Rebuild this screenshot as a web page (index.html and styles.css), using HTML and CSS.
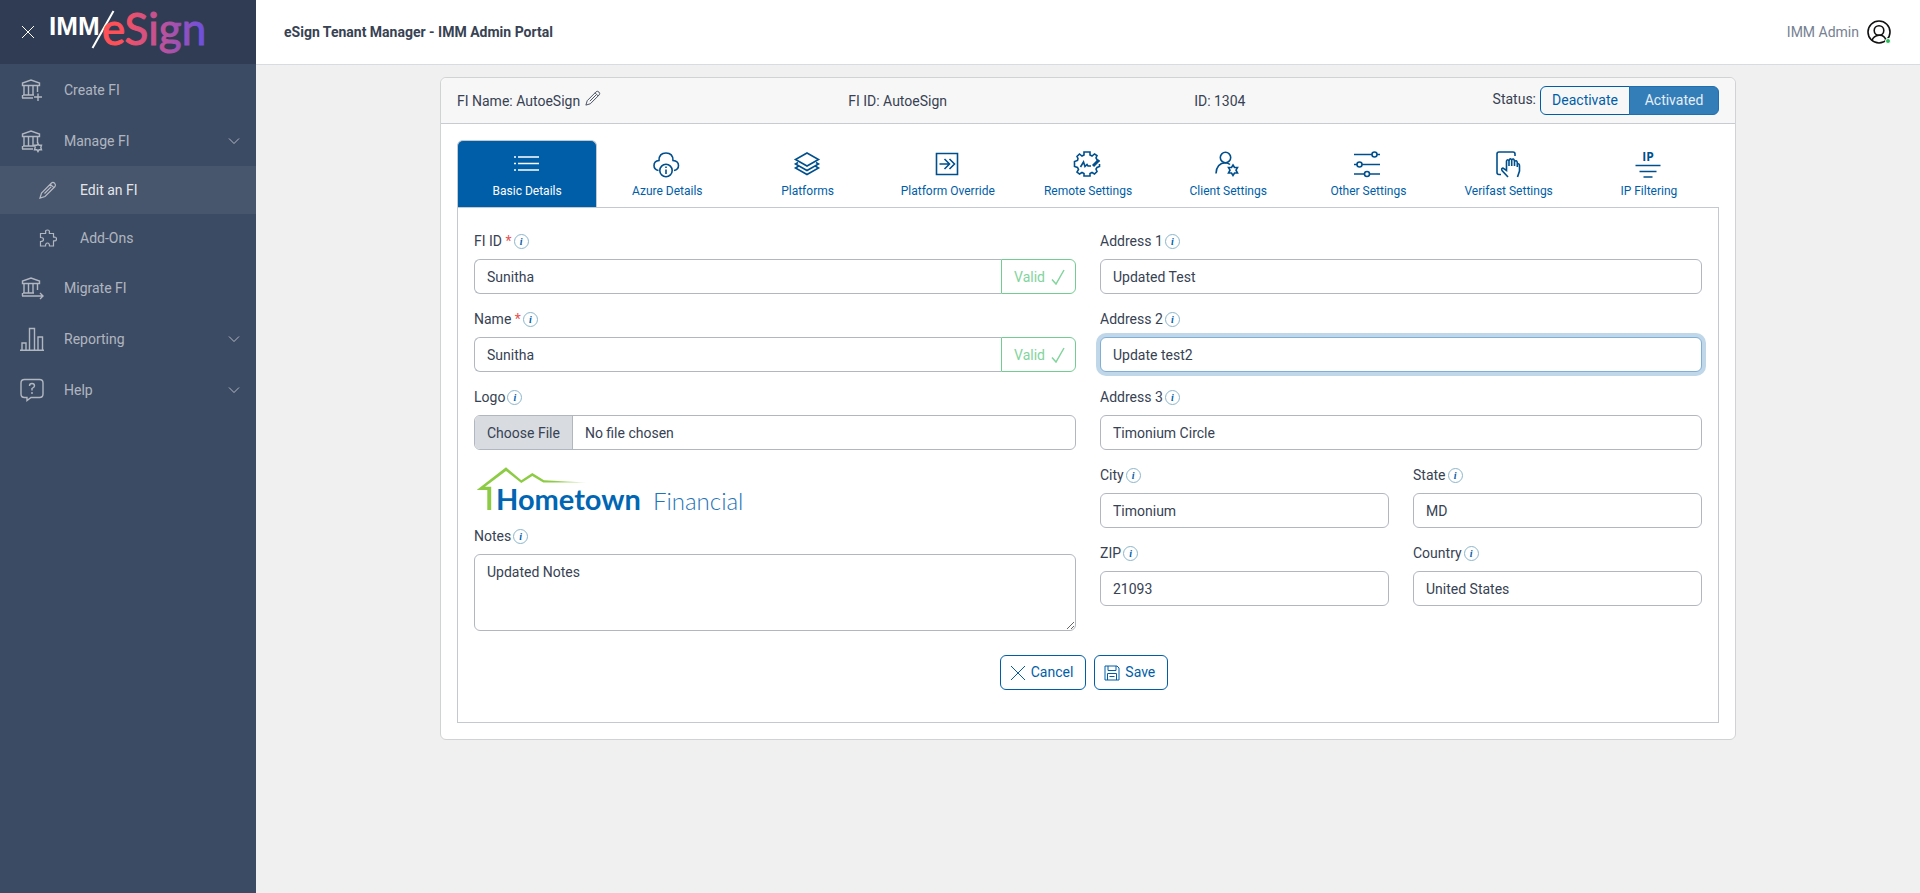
FILE: index.html
```html
<!DOCTYPE html>
<html lang="en">
<head>
    <meta charset="UTF-8">
    <meta name="viewport" content="width=device-width, initial-scale=1.0">
    <title>eSign Tenant Manager - IMM Admin Portal</title>
    <link rel="stylesheet" href="styles.css">
</head>
<body>
    <svg class="sprite" aria-hidden="true">
        <symbol id="bank" viewBox="0 0 24 24">
            <path d="M2.500 7.500V5L11 2 19.500 5V7.500ZM4 8V17M8.500 8V17M13 8V17M17.500 8V14M3 17H14M2 20H13M2.500 17V20"/>
        </symbol>
        <symbol id="pencil" viewBox="0 0 18 18">
            <path d="M1 17 2.500 12 12.500 2Q14 .8 15.700 2.300 17.200 4 16 5.500L6 15.500ZM11.300 3.200 14.800 6.700M5.500 12.500 12.300 5.700"/>
        </symbol>
        <symbol id="chevron" viewBox="0 0 12 12">
            <path d="M1 3.500 6 8.500 11 3.500"/>
        </symbol>
        <symbol id="check" viewBox="0 0 14 16">
            <path d="M1 10.500 5 15 13 1"/>
        </symbol>
    </svg>

    <aside class="sidebar">
        <div class="brand">
            <button class="close" aria-label="Close menu">
                <svg viewBox="0 0 14 14"><path d="M1 1 13 13M13 1 1 13"/></svg>
            </button>
            <svg class="logo" viewBox="0 0 158 50" role="img" aria-label="IMM eSign">
                <defs>
                    <linearGradient id="brandFill" gradientUnits="userSpaceOnUse" x1="54" y1="0" x2="156" y2="0">
                        <stop offset="0.15" stop-color="#ff5058"/>
                        <stop offset="0.6" stop-color="#b8529e"/>
                        <stop offset="1" stop-color="#6a50e0"/>
                    </linearGradient>
                </defs>
                <text class="logo-imm" x="0" y="28">IMM</text>
                <path class="logo-slash" d="M43.500 41 64.500 4"/>
                <text class="logo-esign" x="53" y="38">eSign</text>
            </svg>
        </div>
        <nav class="menu">
            <a href="#">
                <svg><use href="#bank"/><path d="M18 15.500V23M14 19H22"/></svg>
                Create FI
            </a>
            <a href="#">
                <svg><use href="#bank"/><path d="M18 14.500 19 16.200H21.500L20.800 18.500 21.500 20.800H19L18 22.500 17 20.800H14.500L15.200 18.500 14.500 16.200H17Z"/></svg>
                Manage FI
                <svg class="chevron"><use href="#chevron"/></svg>
            </a>
            <a href="#" class="sub active">
                <svg><use href="#pencil"/></svg>
                Edit an FI
            </a>
            <a href="#" class="sub">
                <svg viewBox="0 0 18 18"><path d="M1.500 4.500H6.500Q7 4 6.500 3 6.500 1 8.500 1T10.500 3Q10 4 10.500 4.500H14.500V8Q15 8.500 15.500 8 17.500 8 17.500 10T15.500 12Q15 11.500 14.500 12V17H10.500Q10.500 14 8.500 14T6.500 17H1.500V12.500Q4.500 12.500 4.500 10.500T1.500 8.500Z"/></svg>
                Add-Ons
            </a>
            <a href="#">
                <svg><use href="#bank"/><path d="M13 20H23M20 17 23 20 20 23"/></svg>
                Migrate FI
            </a>
            <a href="#">
                <svg><path d="M0 23.300H24M2 23V16H6V23M9.500 23V1.500H14.500V23M18 23V10H22.500V23"/></svg>
                Reporting
                <svg class="chevron"><use href="#chevron"/></svg>
            </a>
            <a href="#">
                <svg><path d="M4.500 1.500H19.500Q23 1.500 23 5V16Q23 19.500 19.500 19.500H11L7 22.500V19.500H4.500Q1 19.500 1 16V5Q1 1.500 4.500 1.500Z"/><path d="M9.500 8Q9.500 5.500 12 5.500T14.500 8Q14.500 9.200 12 10.500V12.500M12 14V16"/></svg>
                Help
                <svg class="chevron"><use href="#chevron"/></svg>
            </a>
        </nav>
    </aside>

    <div class="wrapper">
        <header class="topbar">
            <h1>eSign Tenant Manager - IMM Admin Portal</h1>
            <a href="#" class="user">
                IMM Admin
                <svg viewBox="0 0 24 24">
                    <circle cx="12" cy="12" r="11"/>
                    <circle cx="12" cy="10.500" r="4.800"/>
                    <path d="M5 20.500Q6.500 15.800 12 15.300T19 20.500"/>
                    <circle class="online" cx="21" cy="21" r="2.500"/>
                </svg>
            </a>
        </header>

        <main class="container">
            <section class="card">
                <div class="card-header">
                    <div class="fi-name">
                        FI Name: AutoeSign
                        <button class="edit" aria-label="Edit name"><svg><use href="#pencil"/></svg></button>
                    </div>
                    <div>FI ID: AutoeSign</div>
                    <div>ID: 1304</div>
                    <div class="status">
                        <span>Status:</span>
                        <div class="btn-group">
                            <button>Deactivate</button>
                            <button class="on" disabled>Activated</button>
                        </div>
                    </div>
                </div>

                <div class="card-body">
                    <div class="tabs" role="tablist">
                        <button role="tab" aria-selected="true" class="active">
                            <svg viewBox="0 0 28 28"><path d="M6 7H27M6 13.500H27M6 20H27M2 7H4M2 13.500H4M2 20H4"/></svg>
                            Basic Details
                        </button>
                        <button role="tab" aria-selected="false">
                            <svg viewBox="0 0 28 28"><path d="M6.500 20.500Q2 19.500 2 15.500 2 11 7 10.500 7 3 14 3T21 10.500Q26.500 11 26.500 15.500 26.500 19.500 22 20.500"/><circle cx="14" cy="20.500" r="6.200"/><path d="M14 19.500V24M14 16.500V18"/></svg>
                            Azure Details
                        </button>
                        <button role="tab" aria-selected="false">
                            <svg viewBox="0 0 28 28"><path d="M14 3 25.500 9.500 14 16 2.500 9.500ZM5 12.500 2.500 14 14 20.500 25.500 14 23 12.500M5 16.500 2.500 18 14 24.500 25.500 18 23 16.500"/></svg>
                            Platforms
                        </button>
                        <button role="tab" aria-selected="false">
                            <svg viewBox="0 0 28 28"><path d="M3.500 3.500H24.500V24.500H3.500ZM6.500 14H16M11.500 9 16.500 14 11.500 19M16.500 9 21.500 14 16.500 19"/></svg>
                            Platform Override
                        </button>
                        <button role="tab" aria-selected="false">
                            <svg viewBox="0 0 28 28"><path d="M26.500 11 24.500 10.500 23 8 24 5.500 21.500 4 19 6 17 5V2H11V5L9 6 6.500 4 4 6.500 5 8.500 4.500 10.500 1.500 11.500V16.500L4.500 17.500 5.500 19.500 4 22 6.500 24 9 22.500 11 23.500V26H17V23.500L19 22.500 21.500 24 24 21.500 23 19 24 17.500 26.500 16.500V14"/><path d="M7.500 17 10.500 12 12 16.500 14 14.500 15 16 18 16"/><path class="thick" d="M20 16 26 10"/></svg>
                            Remote Settings
                        </button>
                        <button role="tab" aria-selected="false">
                            <svg viewBox="0 0 28 28"><circle cx="12.500" cy="7.500" r="5.200"/><path d="M3 23.500Q3.500 13 12.500 12.700 15 12.700 17 14.500"/><path d="M20 15 21.500 17.500H24.500L23 20.200 24.500 23H21.500L20 25.500 18.500 23H15.500L17 20.200 15.500 17.500H18.500Z"/></svg>
                            Client Settings
                        </button>
                        <button role="tab" aria-selected="false">
                            <svg viewBox="0 0 28 28"><path d="M1 4.500H19M24 4.500H27M1 14.500H4M9 14.500H27M1 24H11.500M16.500 24H27"/><circle cx="21.500" cy="4.500" r="2.500"/><circle cx="6.500" cy="14.500" r="2.500"/><circle cx="14" cy="24" r="2.500"/></svg>
                            Other Settings
                        </button>
                        <button role="tab" aria-selected="false">
                            <svg viewBox="0 0 28 28"><path d="M7 24.500H5Q3 24.500 3 22.500V4Q3 2 5 2H19Q21 2 21 4V6M14 27 8 20.500Q7 18.500 9 18L12.500 20.500V11Q13.500 8.500 15 11V16M15 11Q16 7 17.700 10V16M17.700 10Q19.500 7.500 20.500 11V16M20.500 11.500Q22.500 9.500 23.300 12.500V17M23.300 14Q25.500 13 25.500 16V21L23.500 27"/></svg>
                            Verifast Settings
                        </button>
                        <button role="tab" aria-selected="false">
                            <svg viewBox="0 0 28 28"><text x="14" y="11">IP</text><path d="M1.500 15.500H26.500M5.500 21.500H22.500M9.500 27H18.500"/></svg>
                            IP Filtering
                        </button>
                    </div>

                    <form class="panel">
                        <div class="columns">
                            <div class="column">
                                <div class="field">
                                    <label for="fiId">FI ID <span class="required">*</span><span class="info">i</span></label>
                                    <div class="input-group">
                                        <input type="text" id="fiId" value="Sunitha">
                                        <span class="valid">Valid <svg><use href="#check"/></svg></span>
                                    </div>
                                </div>
                                <div class="field">
                                    <label for="name">Name <span class="required">*</span><span class="info">i</span></label>
                                    <div class="input-group">
                                        <input type="text" id="name" value="Sunitha">
                                        <span class="valid">Valid <svg><use href="#check"/></svg></span>
                                    </div>
                                </div>
                                <div class="field">
                                    <label for="logo">Logo<span class="info">i</span></label>
                                    <input type="file" id="logo">
                                </div>
                                <svg class="fi-logo" viewBox="0 0 280 47" role="img" aria-label="Hometown Financial">
                                    <defs>
                                        <linearGradient id="roof"><stop offset="0.7" stop-color="#8dcb45"/><stop offset="1" stop-color="#8dcb45" stop-opacity="0.4"/></linearGradient>
                                    </defs>
                                    <path fill="url(#roof)" d="M2.700 26 32 3.300 47.300 16.300 58.300 9 70 16.300 112 18.500 69.300 18.500 58.300 12 47.300 18.900 32 6.900 11 22.700H17.200V46H13.300V26Z"/>
                                    <text class="hometown" x="22" y="46">Hometown</text>
                                    <text class="financial" x="179" y="46">Financial</text>
                                </svg>
                                <div class="field">
                                    <label for="notes">Notes<span class="info">i</span></label>
                                    <textarea id="notes" rows="3">Updated Notes</textarea>
                                </div>
                            </div>

                            <div class="column">
                                <div class="field">
                                    <label for="address1">Address 1<span class="info">i</span></label>
                                    <input type="text" id="address1" value="Updated Test">
                                </div>
                                <div class="field">
                                    <label for="address2">Address 2<span class="info">i</span></label>
                                    <input type="text" id="address2" value="Update test2">
                                </div>
                                <div class="field">
                                    <label for="address3">Address 3<span class="info">i</span></label>
                                    <input type="text" id="address3" value="Timonium Circle">
                                </div>
                                <div class="pair">
                                    <div class="field">
                                        <label for="city">City<span class="info">i</span></label>
                                        <input type="text" id="city" value="Timonium">
                                    </div>
                                    <div class="field">
                                        <label for="state">State<span class="info">i</span></label>
                                        <input type="text" id="state" value="MD">
                                    </div>
                                    <div class="field">
                                        <label for="zip">ZIP<span class="info">i</span></label>
                                        <input type="text" id="zip" value="21093">
                                    </div>
                                    <div class="field">
                                        <label for="country">Country<span class="info">i</span></label>
                                        <input type="text" id="country" value="United States">
                                    </div>
                                </div>
                            </div>
                        </div>

                        <div class="actions">
                            <button type="button">
                                <svg viewBox="0 0 16 16"><path d="M1 1 15 15M15 1 1 15"/></svg>
                                Cancel
                            </button>
                            <button type="submit">
                                <svg viewBox="0 0 16 16"><path d="M1 1H13L15 3V15H1ZM4 1V5.500H12V1M3.500 15V8.500H12.500V15M5.500 11.500H10.500"/></svg>
                                Save
                            </button>
                        </div>
                    </form>
                </div>
            </section>
        </main>
    </div>

    <script>
        const address2 = document.getElementById('address2');
        address2.focus();
        address2.setSelectionRange(address2.value.length, address2.value.length);
    </script>
</body>
</html>
```

FILE: styles.css
```css
* {
    margin: 0;
    padding: 0;
    box-sizing: border-box;
}

body {
    display: flex;
    min-height: 100vh;
    background: #f0f0f0;
    color: #374253;
    font-family: Roboto, sans-serif;
    font-size: 14px;
    line-height: 22px;
}

button,
input,
textarea {
    font: inherit;
    color: inherit;
}

button {
    cursor: pointer;
    background: none;
    border: none;
}

a {
    text-decoration: none;
}

svg {
    fill: none;
    stroke: currentColor;
    flex: none;
}

.sprite {
    position: absolute;
    width: 0;
    height: 0;
}

/* Sidebar */
.sidebar {
    flex: 0 0 256px;
    background: #3c4b64;
    color: rgba(255, 255, 255, 0.6);
}

.brand {
    display: flex;
    align-items: center;
    gap: 14px;
    height: 64px;
    padding-left: 21px;
    background: #303c54;
}

.close {
    display: flex;
    color: #fff;
}

.close svg {
    width: 14px;
    height: 14px;
}

.logo {
    width: 158px;
    height: 50px;
    overflow: visible;
}

.logo text {
    stroke: none;
}

.logo-imm {
    fill: #fff;
    font: 700 26px "Liberation Sans", sans-serif;
}

.logo-slash {
    stroke: #fff;
    stroke-width: 2;
}

.logo .logo-esign {
    fill: url(#brandFill);
    stroke: url(#brandFill);
    font: 400 44px Lato, sans-serif;
}

.menu a {
    display: flex;
    align-items: center;
    gap: 20px;
    height: 51px;
    padding: 0 16px 0 20px;
    color: inherit;
}

.menu svg {
    width: 24px;
    height: 24px;
    stroke-width: 1.4;
}

.menu .sub {
    gap: 23px;
    height: 48px;
    padding-left: 39px;
}

.menu .sub svg {
    width: 18px;
    height: 18px;
    stroke-width: 1.2;
}

.menu .active {
    background: #48566d;
    color: rgba(255, 255, 255, 0.87);
}

.menu .active svg {
    color: rgba(255, 255, 255, 0.6);
}

.menu .chevron {
    width: 12px;
    height: 12px;
    margin-left: auto;
    stroke-width: 1;
}

/* Top bar */
.wrapper {
    flex: 1;
    min-width: 0;
}

.topbar {
    display: flex;
    align-items: center;
    justify-content: space-between;
    height: 65px;
    padding: 0 29px 0 28px;
    background: #fff;
    border-bottom: 1px solid #d8dbe0;
}

.topbar h1 {
    font-size: 14px;
    font-weight: 700;
}

.user {
    display: flex;
    align-items: center;
    gap: 8px;
    color: #768192;
}

.user svg {
    width: 24px;
    height: 24px;
    stroke: #111;
    stroke-width: 1.6;
    overflow: visible;
}

.user .online {
    fill: #2eb85c;
    stroke: #fff;
    stroke-width: 1;
}

/* Card */
.container {
    max-width: 1320px;
    margin: 0 auto;
    padding: 12px;
}

.card {
    background: #fff;
    border: 1px solid #d0d2d4;
    border-radius: 6px;
}

.card-header {
    display: flex;
    align-items: center;
    justify-content: space-between;
    padding: 8px 16px;
    background: #f7f7f7;
    border-bottom: 1px solid #c8cbcf;
    border-radius: 6px 6px 0 0;
}

.fi-name {
    display: flex;
    gap: 5px;
}

.edit {
    display: flex;
}

.edit svg {
    width: 16px;
    height: 16px;
}

.status {
    display: flex;
    gap: 4px;
}

.status span {
    padding-top: 2px;
}

.btn-group {
    display: flex;
}

.btn-group button {
    min-width: 90px;
    padding: 2px 10px;
    border: 1px solid #005ea8;
    border-radius: 6px 0 0 6px;
    color: #005ea8;
    line-height: 23px;
}

.btn-group .on {
    margin-left: -1px;
    border-color: #1f6fb1;
    border-radius: 0 6px 6px 0;
    background: #337eb9;
    color: #e6eff6;
}

.card-body {
    padding: 16px;
}

.tabs {
    display: flex;
}

.tabs button {
    flex: 1;
    display: flex;
    flex-direction: column;
    align-items: center;
    gap: 4px;
    padding: 9px 0 7px;
    border: 1px solid transparent;
    border-bottom: none;
    border-radius: 6px 6px 0 0;
    color: #005ea8;
    font-size: 12px;
    line-height: 18px;
}

.tabs svg {
    width: 28px;
    height: 28px;
    margin-right: 2px;
    overflow: visible;
    color: #004f8d;
    stroke-width: 1.6;
}

.tabs .thick {
    stroke-width: 3;
}

.tabs text {
    fill: currentColor;
    stroke: none;
    font: 700 12px "Open Sans", sans-serif;
    text-anchor: middle;
}

.tabs .active {
    background: #005ea8;
    border-color: #c4c9d0;
    color: #fff;
}

.tabs .active svg {
    color: #fff;
}

/* Form */
.panel {
    padding: 22px 16px 32px;
    border: 1px solid #c4c9d0;
}

.columns,
.pair {
    display: grid;
    grid-template-columns: 1fr 1fr;
    column-gap: 24px;
}

.field {
    margin-bottom: 14px;
}

label {
    display: flex;
    margin-bottom: 7px;
    white-space: pre;
}

.required {
    color: #e55353;
}

.info {
    width: 15px;
    height: 15px;
    margin: 4px 0 0 2px;
    border: 1px solid #8bb6cc;
    border-radius: 50%;
    color: #005ea8;
    font: italic 700 10px/13px "Liberation Serif", serif;
    text-align: center;
}

input,
textarea {
    display: block;
    width: 100%;
    padding: 6px 12px;
    background: #fff;
    border: 1px solid #b1b7c1;
    border-radius: 6px;
    line-height: 21px;
}

input {
    height: 35px;
}

textarea {
    padding: 7px 12px 5px;
}

input:focus {
    outline: none;
    border-color: #80aed4;
    box-shadow: 0 0 0 4px #bfd7e9;
}

.input-group {
    display: flex;
}

.input-group input {
    flex: 1;
    border-right: none;
    border-radius: 6px 0 0 6px;
}

.valid {
    display: flex;
    align-items: center;
    gap: 6px;
    padding: 0 10px 0 12px;
    border: 1px solid #73cc92;
    border-radius: 0 6px 6px 0;
    color: #82d49d;
}

.valid svg {
    width: 14px;
    height: 16px;
    stroke-width: 1.5;
}

input[type="file"] {
    padding: 0;
    overflow: hidden;
    line-height: 33px;
}

input::file-selector-button {
    height: 33px;
    margin-right: 12px;
    padding: 2px 12px 0;
    border: none;
    border-right: 1px solid #b1b7c1;
    background: #d8dbe0;
    color: inherit;
    font: inherit;
    line-height: 31px;
}

.fi-logo {
    display: block;
    width: 280px;
    height: 47px;
    margin-bottom: 14px;
    stroke: none;
    overflow: visible;
}

.hometown {
    fill: #0066b3;
    font: 700 29px Lato, sans-serif;
}

.financial {
    fill: #1f74ba;
    font: 300 24px Lato, sans-serif;
}

.actions {
    display: flex;
    justify-content: center;
    padding-top: 10px;
}

.actions button {
    display: flex;
    align-items: center;
    gap: 5px;
    margin-right: 8px;
    padding: 5px 12px 5px 9px;
    border: 1px solid #005ea8;
    border-radius: 6px;
    color: #005ea8;
    line-height: 23px;
}

.actions svg {
    width: 16px;
    height: 16px;
}
```
